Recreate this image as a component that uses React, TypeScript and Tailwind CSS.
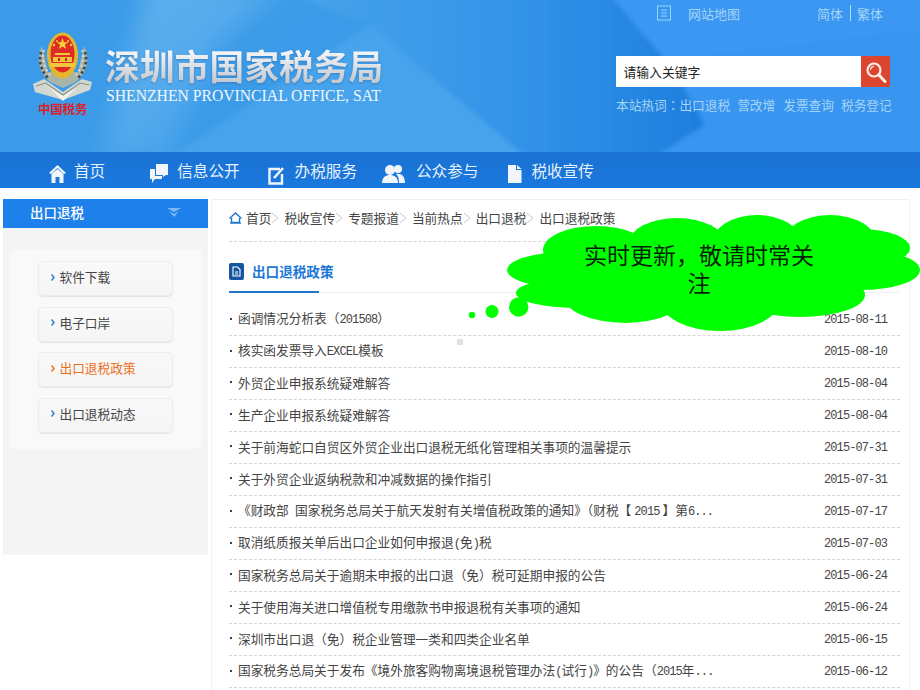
import React from "react";

const cjk = "font-['Noto_Sans_CJK_SC','Liberation_Sans',sans-serif]";

const rows: [string, string][] = [
  ["函调情况分析表（201508）", "2015-08-11"],
  ["核实函发票导入EXCEL模板", "2015-08-10"],
  ["外贸企业申报系统疑难解答", "2015-08-04"],
  ["生产企业申报系统疑难解答", "2015-08-04"],
  ["关于前海蛇口自贸区外贸企业出口退税无纸化管理相关事项的温馨提示", "2015-07-31"],
  ["关于外贸企业返纳税款和冲减数据的操作指引", "2015-07-31"],
  ["《财政部 国家税务总局关于航天发射有关增值税政策的通知》（财税【2015】第6...", "2015-07-17"],
  ["取消纸质报关单后出口企业如何申报退(免)税", "2015-07-03"],
  ["国家税务总局关于逾期未申报的出口退（免）税可延期申报的公告", "2015-06-24"],
  ["关于使用海关进口增值税专用缴款书申报退税有关事项的通知", "2015-06-24"],
  ["深圳市出口退（免）税企业管理一类和四类企业名单", "2015-06-15"],
  ["国家税务总局关于发布《境外旅客购物离境退税管理办法(试行)》的公告（2015年...", "2015-06-12"],
];

const crumbs = ["首页", "税收宣传", "专题报道", "当前热点", "出口退税", "出口退税政策"];
const side = ["软件下载", "电子口岸", "出口退税政策", "出口退税动态"];

const mono = "font-['Liberation_Mono',monospace] text-[12px] tracking-[-0.9px]";

function RowText({ text }: { text: string }) {
  const parts = text.split(/([\x20-\x7e]+)/);
  return (
    <>
      {parts.map((p, i) =>
        /^[\x20-\x7e]+$/.test(p) ? (
          <span key={i} className={`${mono} whitespace-pre ${parts[i + 1]?.startsWith("】") ? "px-[3px]" : ""}`}>{p}</span>
        ) : (
          <span key={i}>{p}</span>
        ),
      )}
    </>
  );
}

function Emblem() {
  return (
    <svg width="66" height="74" viewBox="30 30 66 74">
      <defs>
        <filter id="soft" x="-10%" y="-10%" width="120%" height="120%">
          <feGaussianBlur stdDeviation="0.45" />
        </filter>
      </defs>
      <g filter="url(#soft)">
        <path d="M42 46 C36 58 38 72 50 82 L63 88 L76 82 C88 72 90 58 84 46 L78 72 L48 72 Z" fill="#a9b3a9" />
        <path d="M41 52 C38 62 42 72 49 79 M85 52 C88 62 84 72 77 79" stroke="#3f4a44" strokeWidth="2.6" strokeDasharray="2.5 2.5" fill="none" />
        <path d="M44 50 C41 60 45 70 52 77 M82 50 C85 60 81 70 74 77" stroke="#e5e8e0" strokeWidth="1.4" strokeDasharray="2 3" fill="none" />
        <ellipse cx="62.5" cy="55.5" rx="15.5" ry="23" fill="#e2b72f" />
        <ellipse cx="62.5" cy="54" rx="12" ry="18.5" fill="#df2a28" />
        <path d="M62.5 38 l1.5 4.2 h4.4 l-3.6 2.6 1.4 4.2 -3.7-2.6 -3.7 2.6 1.4-4.2 -3.6-2.6 h4.4 z" fill="#f6d23c" />
        <circle cx="54" cy="45" r="1.2" fill="#f6d23c" />
        <circle cx="71" cy="45" r="1.2" fill="#f6d23c" />
        <circle cx="57" cy="41" r="1" fill="#f6d23c" />
        <circle cx="68" cy="41" r="1" fill="#f6d23c" />
        <path d="M55 53 H70 V55 H55 Z M53 57 H72 V62 H53 Z M50 63 H75 V67 H50 Z" fill="#f0c63a" />
        <path d="M58 58 h2 v3 h-2 z M65 58 h2 v3 h-2 z" fill="#c8271f" />
        <path d="M33 84 L44 79 L63 92 L82 79 L92 82 L90 90 L63 100 L35 92 Z" fill="#d5d8d0" />
        <path d="M36 86 L46 83 L63 95 L80 83 L89 85" stroke="#8b8f86" strokeWidth="1.1" fill="none" />
        <path d="M50 88 L63 96 L76 88 L63 101 Z" fill="#f2f3ec" />
      </g>
    </svg>
  );
}

function Cloud() {
  return (
    <svg width="460" height="140" viewBox="460 200 460 140" className="absolute left-[460px] top-[200px] z-10">
      <g fill="#00ff00">
        <ellipse cx="568" cy="270" rx="61" ry="18" />
        <ellipse cx="576" cy="293" rx="60" ry="15" />
        <ellipse cx="596" cy="250" rx="53" ry="24" />
        <ellipse cx="677" cy="243" rx="48" ry="25" />
        <ellipse cx="757" cy="243" rx="45" ry="28" />
        <ellipse cx="830" cy="243" rx="47" ry="28" />
        <ellipse cx="860" cy="248" rx="50" ry="19" />
        <ellipse cx="860" cy="270" rx="60" ry="20" />
        <ellipse cx="800" cy="295" rx="65" ry="22" />
        <ellipse cx="720" cy="300" rx="60" ry="31" />
        <ellipse cx="625" cy="295" rx="62" ry="28" />
        <ellipse cx="710" cy="270" rx="120" ry="36" />
        <circle cx="518.7" cy="307" r="9.7" />
        <circle cx="492" cy="311.5" r="6.5" />
        <circle cx="472" cy="315" r="3.2" />
      </g>
    </svg>
  );
}

export default function App() {
  return (
    <div className={`relative h-[690px] w-[920px] overflow-hidden bg-white ${cjk}`}>
      {/* Header */}
      <header className="relative h-[152px] overflow-hidden bg-[#3a9aea]">
        <svg width="920" height="152" viewBox="0 0 920 152" className="absolute left-0 top-0">
          <defs>
            <linearGradient id="g1" x1="0" y1="0" x2="1" y2="1">
              <stop offset="0" stopColor="#74bdf0" />
              <stop offset="1" stopColor="#3f9eea" />
            </linearGradient>
            <linearGradient id="g2" x1="0" y1="0" x2="1" y2="0">
              <stop offset="0" stopColor="#49a4ea" />
              <stop offset="0.55" stopColor="#3393e8" />
              <stop offset="1" stopColor="#1e7ede" />
            </linearGradient>
            <filter id="blur1" x="-5%" y="-5%" width="110%" height="110%">
              <feGaussianBlur stdDeviation="2" />
            </filter>
            <filter id="blur2" x="-10%" y="-10%" width="120%" height="120%">
              <feGaussianBlur stdDeviation="12" />
            </filter>
          </defs>
          <rect width="920" height="152" fill="#3b9be8" />
          <polygon points="150,-20 290,-20 215,50 165,160 100,160" fill="url(#g1)" opacity="0.75" filter="url(#blur2)" />
          <g filter="url(#blur1)">
            <polygon points="370,25 540,160 165,160" fill="#46a3ec" />
            <polygon points="290,-5 630,-5 705,125 650,160 530,160 370,25" fill="url(#g2)" />
            <polygon points="630,-5 925,-5 925,160 650,160 705,125" fill="#3895f0" />
            <polygon points="610,-5 925,-5 925,30 760,50 665,60" fill="#3a97f2" />
          </g>
        </svg>
        <div className="relative flex h-full">
          <div className="ml-[30px] mt-[30px] w-[66px]">
            <Emblem />
            <div className="-mt-[3px] ml-[8px] whitespace-nowrap font-['Noto_Sans_CJK_SC',sans-serif] text-[12.5px] font-bold leading-[15px] tracking-[-0.2px] text-[#d8232a]">
              中国税务
            </div>
          </div>
          <div className="ml-[9px] mt-[45px]">
            <div className="bg-gradient-to-b from-white to-[#bfc5cd] bg-clip-text text-[34.8px] font-bold leading-[40px] whitespace-nowrap text-transparent drop-shadow-[0_1px_1px_rgba(30,70,120,0.35)]">
              深圳市国家税务局
            </div>
            <div className="mt-[2px] ml-[1px] font-['Liberation_Serif',serif] text-[15.7px] leading-[18px] text-[#f2f6fa] whitespace-nowrap">
              SHENZHEN PROVINCIAL OFFICE, SAT
            </div>
          </div>
          <div className="ml-auto mr-[27px] flex w-[277px] flex-col">
            <div className="mt-[5px] flex h-[16px] items-center text-[13px] leading-none text-[#a4d4f7]">
              <svg width="14" height="16" viewBox="0 0 14 16" className="ml-[41px]" fill="none" stroke="#8fd8f8" strokeWidth="1">
                <rect x="0.5" y="1" width="13" height="14" />
                <path d="M4 5h6M4 8h6M4 11h6" />
              </svg>
              <span className="ml-[17px]">网站地图</span>
              <span className="ml-[77px]">简体</span>
              <span className="mx-[6.5px] h-[16px] w-px bg-[#b5ddf8]" />
              <span>繁体</span>
            </div>
            <div className="mt-[35px] flex h-[31px] w-[274px]">
              <div className="flex flex-1 items-center bg-white pl-[7.5px] text-[12.8px] text-[#222]">请输入关键字</div>
              <div className="flex w-[29px] items-center justify-center bg-[#dc4630]">
                <svg width="22" height="22" viewBox="0 0 22 22" fill="none" stroke="#fdeee8">
                  <circle cx="9" cy="9" r="6.5" strokeWidth="2.2" />
                  <path d="M14 14 L20 20.5" strokeWidth="3" strokeLinecap="round" />
                  <path d="M5.5 9 A3.8 3.8 0 0 1 9 5.3" strokeWidth="1.2" />
                </svg>
              </div>
            </div>
            <div className="mt-[9px] flex whitespace-nowrap text-[12.7px] leading-[17px] text-[#a4d4f7]">
              <span>本站热词<span className="font-['Noto_Sans_CJK_TC',sans-serif]">：</span>出口退税</span>
              <span className="ml-[7px]">营改增</span>
              <span className="ml-[8px]">发票查询</span>
              <span className="ml-[7px]">税务登记</span>
            </div>
          </div>
        </div>
      </header>

      {/* Nav */}
      <nav className="relative flex h-[36px] items-center bg-gradient-to-b from-[#1a72d2] to-[#1a78e0] text-[15.6px] text-[#e6f2fc]">
        <div className="ml-[49px] flex items-center">
          <svg width="17" height="20" viewBox="0 0 17 20" className="mt-[8px]" fill="#f2f6fa">
            <path d="M8.5 1 L17 9 L15 10 L8.5 4 L2 10 L0 9 Z" />
            <path d="M2.5 10 L8.5 5 L14.5 10 V19 H10.5 V13 H6.5 V19 H2.5 Z" />
          </svg>
          <span className="ml-[8px] leading-[20px]">首页</span>
        </div>
        <div className="ml-[45px] flex items-center">
          <svg width="18" height="20" viewBox="0 0 18 20" className="mt-[8px]" fill="#f2f6fa">
            <path d="M6 0 H18 V11 H16 L13 13 V11 H6 Z" />
            <path d="M0 5 H5 V12 H12 V15 H5 L2 19 V15 H0 Z" />
          </svg>
          <span className="ml-[9px] leading-[20px]">信息公开</span>
        </div>
        <div className="ml-[28px] flex items-center">
          <svg width="17" height="20" viewBox="0 0 17 20" className="mt-[9px]" fill="none" stroke="#f2f6fa" strokeWidth="2.4">
            <path d="M12 4 H1.5 V18.5 H14 V9" />
            <path d="M6 13 L15 3" strokeWidth="2.6" />
          </svg>
          <span className="ml-[10px] leading-[20px]">办税服务</span>
        </div>
        <div className="ml-[25px] flex items-center">
          <svg width="23" height="20" viewBox="0 0 23 20" className="mt-[8px]" fill="#f2f6fa">
            <circle cx="8" cy="6" r="5" />
            <path d="M0 19 C0 13 4 11 8 11 C12 11 16 13 16 19 Z" />
            <circle cx="16" cy="5" r="4" />
            <path d="M17 19 C17 14 16 12 14 10 C19 9 23 12 23 19 Z" />
          </svg>
          <span className="ml-[11px] leading-[20px]">公众参与</span>
        </div>
        <div className="ml-[30px] flex items-center">
          <svg width="14" height="20" viewBox="0 0 14 20" className="mt-[8px]" fill="#f2f6fa">
            <path d="M0 1 H8 V6 H13.5 V19 H0 Z" />
            <path d="M9 1 L13.5 5 H9 Z" />
          </svg>
          <span className="ml-[9px] leading-[20px]">税收宣传</span>
        </div>
      </nav>

      {/* Main */}
      <main className="mt-[11px] flex pl-[3px]">
        <aside className="h-[356px] w-[205px] shrink-0 bg-[#f4f4f4]">
          <div className="flex h-[29px] items-center justify-between bg-[#1e80ea] pb-[2px] pl-[27px] pr-[27px] text-[13.5px] font-medium text-white">
            <span>出口退税</span>
            <svg width="14" height="9" viewBox="0 0 14 9" fill="#7fb8f2">
              <path d="M0 0 H14 L7 4 Z" />
              <path d="M2 3 L7 6 L12 3 L7 9 Z" />
            </svg>
          </div>
          <div className="ml-[7px] mt-[21px] flex h-[200px] w-[192px] flex-col gap-[10.5px] rounded-[6px] bg-[#f9f9f9] pl-[28px] pt-[12px]">
            {side.map((s, i) => (
              <div
                key={s}
                className={`flex h-[35px] w-[135px] items-center rounded-[5px] border border-[#ececec] bg-gradient-to-b from-[#f9f9f9] to-[#f5f5f5] pb-[3px] pl-[12px] text-[12.7px] shadow-[0_1px_1px_#e4e4e4] ${i === 2 ? "text-[#ea6f1c]" : "text-[#444]"}`}
              >
                <svg width="4" height="7" viewBox="0 0 4 7" className="mr-[4.5px]" fill="none" stroke={i === 2 ? "#ea6f1c" : "#2a78c8"} strokeWidth="1.4">
                  <path d="M0.5 0.5 L3 3.5 L0.5 6.5" />
                </svg>
                {s}
              </div>
            ))}
          </div>
        </aside>

        <section className="ml-[3px] h-[500px] w-[699px] shrink-0 border border-[#f0f0f0] pl-[17px] pr-[9px]">
          <div className="flex h-[42px] items-center border-b border-dashed border-[#d4d4d4] pb-[5px] text-[12.7px] text-[#444]">
            <svg width="13" height="12" viewBox="0 0 13 12" className="mr-[4px]" fill="none" stroke="#2277c4" strokeWidth="1.4">
              <path d="M0.5 6.5 L6.5 1 L12.5 6.5" />
              <path d="M2.5 6 V10.5 H10.5 V6" />
              <path d="M1 11 H12" />
            </svg>
            {crumbs.map((c, i) => (
              <React.Fragment key={c}>
                <span>{c}</span>
                {i < crumbs.length - 1 && (
                  <svg width="10" height="14" viewBox="0 0 10 14" className="mr-[3px]" fill="none" stroke="#c8c8c8" strokeWidth="1">
                    <path d="M1 2 L7 7 L1 12" />
                  </svg>
                )}
              </React.Fragment>
            ))}
          </div>

          <div className="relative mt-[21px] flex h-[30px] items-start border-b border-[#f0f0f0]">
            <div className="-mt-[1px] flex items-center">
              <span className="mr-[8px] flex h-[17px] w-[15px] items-center justify-center rounded-[2px] bg-[#16569e]">
                <svg width="9" height="11" viewBox="0 0 9 11" fill="none" stroke="white" strokeWidth="1.1">
                  <path d="M1 1 H5.5 L8 3.5 V10 H1 Z" />
                  <path d="M3 6 H6 M3 8 H6" />
                </svg>
              </span>
              <span className="text-[13.6px] font-bold leading-[18px] text-[#1e78d8]">出口退税政策</span>
            </div>
            <div className="absolute bottom-[-1px] left-0 h-[2px] w-[90px] bg-[#2277cc]" />
          </div>

          <ul className="mt-[11px]">
            {rows.map(([t, d]) => (
              <li key={t + d} className="flex h-[32px] items-center justify-between border-b border-dashed border-[#d4d4d4] pb-[2px] pl-[1px] pr-[13px] text-[12.7px] text-[#444]">
                <span className="flex items-center whitespace-nowrap">
                  <span className="mr-[6px] size-[2px] bg-[#444]" />
                  <span><RowText text={t} /></span>
                </span>
                <span className={`${mono} mt-[2px] text-[#444]`}>{d}</span>
              </li>
            ))}
          </ul>
        </section>
      </main>

      <div className="absolute left-[457px] top-[339px] size-[6px] bg-[#e2e2e2]" />

      {/* Callout */}
      <Cloud />
      <div className="absolute left-[581px] top-[240px] z-20 w-[236px] text-center font-['Noto_Sans_CJK_SC',serif] text-[23px] leading-[28px] text-[#041f04]">
        实时更新，敬请时常关注
      </div>
    </div>
  );
}
